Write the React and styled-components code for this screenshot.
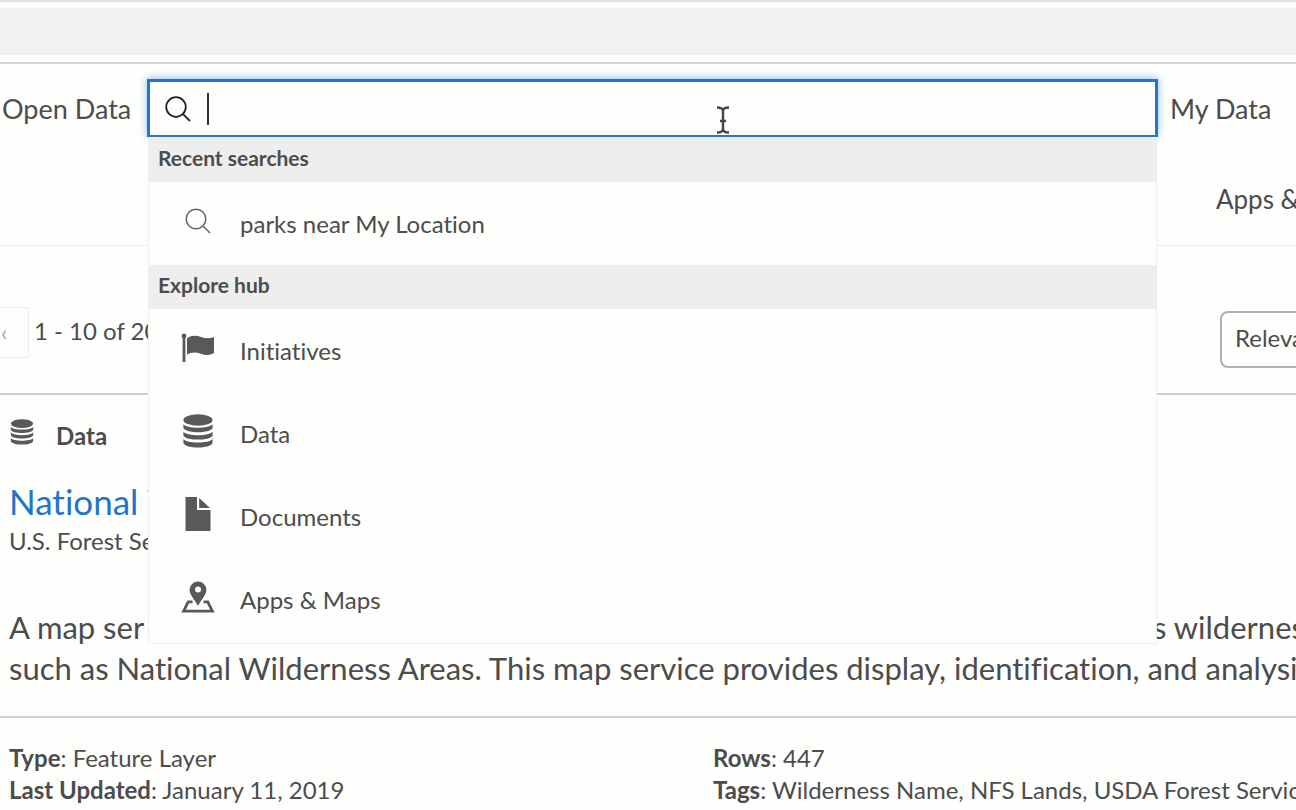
import React from 'react';
import styled, { createGlobalStyle } from 'styled-components';

const recentSearches = ['parks near My Location'];

const categories = [
  { name: 'Initiatives', icon: <FlagIcon /> },
  { name: 'Data', icon: <DataIcon size={34} /> },
  { name: 'Documents', icon: <DocumentIcon /> },
  { name: 'Apps & Maps', icon: <MapPinIcon /> },
];

function SearchIcon({ color, weight }) {
  return (
    <svg width="26" height="26" viewBox="0 0 26 26" fill="none" stroke={color} strokeWidth={weight}>
      <circle cx="11" cy="11" r="9.8" />
      <path d="M17.8 17.8L25 25" />
    </svg>
  );
}

function FlagIcon() {
  return (
    <svg width="34" height="30" viewBox="0 0 34 30" fill="#59595b">
      <circle cx="3" cy="3" r="2.4" />
      <path d="M1.6 3h2.8v26H1.6z" />
      <path d="M6 5.200C10 2.200 15 2 20 4c4.500 1.800 8.500 1.800 13 0v16c-4.500 2.600-9 2.600-13 .8-5-2-10-2-14 .8z" />
    </svg>
  );
}

function DataIcon({ size }) {
  return (
    <svg width={size} height={size} viewBox="0 0 34 34" fill="#59595b">
      <ellipse cx="17" cy="6" rx="14.600" ry="5.800" />
      <path d="M2.400 10c3 5 26.200 5 29.200 0v4c-2 5.600-27.200 5.600-29.200 0z" />
      <path d="M2.400 17.400c3 5 26.200 5 29.200 0v4c-2 5.600-27.200 5.600-29.200 0z" />
      <path d="M2.400 25c3 4.800 26.200 4.800 29.200 0v4c-2 6-27.200 6-29.200 0z" />
    </svg>
  );
}

function DocumentIcon() {
  return (
    <svg width="34" height="34" viewBox="0 0 34 34" fill="#59595b">
      <path d="M4.500 0H16v13H29.500v21h-25z" />
      <path d="M18.200 1L29 11H18.200z" />
    </svg>
  );
}

function MapPinIcon() {
  return (
    <svg width="34" height="32" viewBox="0 0 34 32">
      <path
        fill="#59595b"
        fillRule="evenodd"
        d="M17 .5a8.400 8.400 0 0 1 8.400 8.400c0 4.800-4.800 9-8.400 16-3.600-7-8.400-11.200-8.400-16A8.400 8.400 0 0 1 17 .5zm0 5a3 3 0 1 0 0 6 3 3 0 0 0 0-6z"
      />
      <path fill="none" stroke="#59595b" strokeWidth="2.800" d="M11.500 20.800H7.200L2.600 30.200h28.800l-4.600-9.400H22.500" />
    </svg>
  );
}

function App() {
  return (
    <Page>
      <GlobalStyle />
      <BrowserBar />
      <Header>
        <SiteName>Open Data</SiteName>
        <Search>
          <SearchBox>
            <SearchIcon color="#222" weight={1.8} />
            <Caret />
            <SearchInput type="text" aria-label="Search" />
            <TextCursor width="14" height="28" viewBox="0 0 14 28">
              <path d="M1 1.500c3.500 0 6 1 6 3.500 0-2.500 2.500-3.500 6-3.500M7 4v20M1 26.500c3.500 0 6-1 6-3.500 0 2.500 2.500 3.500 6 3.500M4 15h6" />
            </TextCursor>
          </SearchBox>
          <Dropdown>
            <GroupTitle>Recent searches</GroupTitle>
            {recentSearches.map((text) => (
              <Option key={text}>
                <OptionIcon>
                  <SearchIcon color="#666" weight={1.5} />
                </OptionIcon>
                {text}
              </Option>
            ))}
            <GroupTitle>Explore hub</GroupTitle>
            {categories.map(({ name, icon }) => (
              <Option key={name}>
                <OptionIcon>{icon}</OptionIcon>
                {name}
              </Option>
            ))}
          </Dropdown>
        </Search>
        <MyData href="#my-data">My Data</MyData>
      </Header>

      <Tabs>
        <Tab href="#apps">Apps &amp; Maps</Tab>
      </Tabs>

      <ResultBar>
        <PrevButton aria-label="Previous page">‹</PrevButton>
        <Count>1 - 10 of 20</Count>
        <SortSelect aria-label="Sort by">
          <option>Relevance</option>
        </SortSelect>
      </ResultBar>

      <Result>
        <Kind>
          <DataIcon size={26} />
          Data
        </Kind>
        <Title>
          <a href="#result">National W</a>
        </Title>
        <Owner>U.S. Forest Service</Owner>
        <Description>
          <SplitLine>
            <span>A map ser</span>
            <LineEnd>s wilderness</LineEnd>
          </SplitLine>
          such as National Wilderness Areas. This map service provides display, identification, and analysis
        </Description>
      </Result>

      <Meta>
        <div>
          <b>Type</b>: Feature Layer
          <br />
          <b>Last Updated</b>: January 11, 2019
        </div>
        <MetaRight>
          <b>Rows</b>: 447
          <br />
          <b>Tags</b>: Wilderness Name, NFS Lands, USDA Forest Service
        </MetaRight>
      </Meta>
    </Page>
  );
}

export default App;

const GlobalStyle = createGlobalStyle`
  * {
    box-sizing: border-box;
  }
  body {
    margin: 0;
    background: #fefefd;
    color: #4c4c4c;
    font-family: Lato, "Liberation Sans", sans-serif;
    font-size: 24px;
    font-variant-ligatures: none;
  }
  a {
    color: inherit;
    text-decoration: none;
  }
`;

const Page = styled.div`
  min-height: 100vh;
  overflow: hidden;
`;
const BrowserBar = styled.div`
  height: 64px;
  border-top: 2px solid #dfe2e6;
  border-bottom: 2px solid #d3d3d5;
  padding: 6px 0 7px;
  background: #f1f1f4 content-box;
`;
const Header = styled.header`
  display: flex;
  padding-top: 15px;
  font-size: 27px;
  line-height: 60px;
`;
const SiteName = styled.div`
  width: 147px;
  padding-left: 2px;
`;
const Search = styled.div`
  position: relative;
  flex: 1;
`;
const SearchBox = styled.div`
  position: relative;
  display: flex;
  align-items: center;
  height: 58px;
  padding-left: 15px;
  border: 3px solid #2277cc;
  border-bottom-width: 2px;
  box-shadow: 0 -1px 8px #8fbdf0;
  background: #fefefd;
`;
const Caret = styled.span`
  width: 2px;
  height: 32px;
  margin-left: 16px;
  background: #333;
`;
const SearchInput = styled.input`
  flex: 1;
  height: 100%;
  padding: 0;
  border: none;
  outline: none;
  background: transparent;
  font: inherit;
`;
/* mouse pointer resting over the field */
const TextCursor = styled.svg`
  position: absolute;
  top: 24px;
  left: 566px;
  fill: none;
  stroke: #444;
  stroke-width: 2.4;
`;
const Dropdown = styled.div`
  position: absolute;
  z-index: 1;
  top: 58px;
  left: 1px;
  right: 1px;
  padding-bottom: 2px;
  border: 1px solid #f0f0f4;
  background: #fefefd;
`;
const GroupTitle = styled.div`
  height: 44px;
  margin: 0 -1px;
  padding-left: 10px;
  background: #eeeeee;
  font-size: 21px;
  font-weight: bold;
  line-height: 40px;
`;
const Option = styled.div`
  display: flex;
  align-items: center;
  height: 83px;
  padding-left: 32px;
  font-size: 24px;
  line-height: 32px;
`;
const OptionIcon = styled.span`
  display: flex;
  justify-content: center;
  width: 34px;
  margin-right: 25px;
  padding-bottom: 6px;
`;
const MyData = styled.a`
  width: 138px;
  padding-left: 12px;
`;
const Tabs = styled.nav`
  display: flex;
  justify-content: flex-end;
  height: 107px;
  padding-top: 44px;
  border-bottom: 1px solid #ececee;
  line-height: 32px;
`;
const Tab = styled.a`
  width: 80px;
  font-size: 26px;
  white-space: nowrap;
`;
const ResultBar = styled.div`
  display: flex;
  align-items: flex-start;
  height: 149px;
  padding-top: 61px;
  border-bottom: 2px solid #cfcfd2;
`;
const PrevButton = styled.button`
  width: 29px;
  height: 51px;
  padding: 0 20px 2px 0;
  border: 1px solid #ececec;
  border-left: none;
  background: none;
  color: #aaa;
  font: inherit;
`;
const Count = styled.div`
  flex: 1;
  padding-left: 5px;
  font-size: 24px;
  line-height: 48px;
`;
const SortSelect = styled.select`
  appearance: none;
  flex: none;
  width: 140px;
  height: 57px;
  margin: 4px -64px 0 0;
  padding: 0 13px 4px;
  border: 2px solid #b0b0b0;
  border-radius: 8px;
  background: #fefefd;
  color: inherit;
  font: inherit;
`;
const Result = styled.article`
  height: 323px;
  padding: 24px 0 0 9px;
  border-bottom: 2px solid #d0d0d0;
`;
const Kind = styled.div`
  display: flex;
  gap: 21px;
  height: 59px;
  font-weight: bold;
  line-height: 34px;
`;
const Title = styled.h2`
  margin: 0;
  color: #1f75c9;
  font-size: 35px;
  font-weight: normal;
  line-height: 46px;
`;
const Owner = styled.div`
  margin-bottom: 49px;
  line-height: 34px;
`;
const Description = styled.div`
  font-size: 31px;
  line-height: 41px;
  white-space: nowrap;
`;
const SplitLine = styled.div`
  display: flex;
  justify-content: space-between;
`;
const LineEnd = styled.span`
  width: 143px;
`;
const Meta = styled.div`
  display: grid;
  grid-template-columns: 1fr 583px;
  padding: 24px 0 4px 9px;
  line-height: 32px;
`;
const MetaRight = styled.div`
  white-space: nowrap;
`;
